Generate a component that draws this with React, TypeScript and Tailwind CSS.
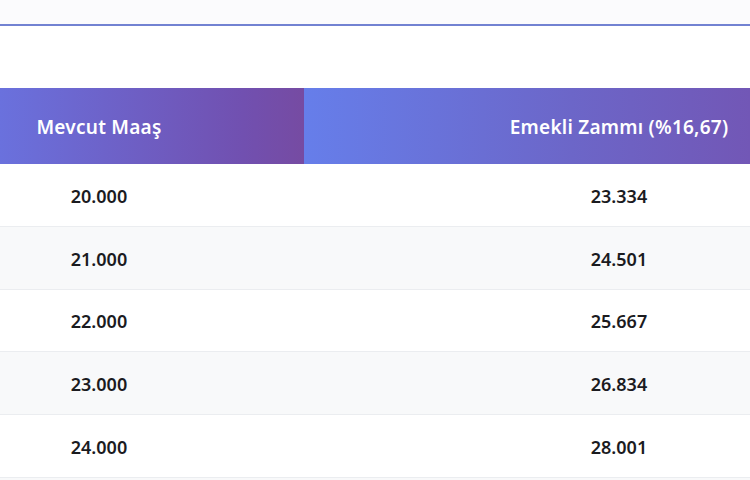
import React from "react";

const rows = [
  ["20.000", "23.334"],
  ["21.000", "24.501"],
  ["22.000", "25.667"],
  ["23.000", "26.834"],
  ["24.000", "28.001"],
];

export default function App() {
  return (
    <div
      className="w-[750px] h-[480px] overflow-hidden bg-white"
      style={{ fontFamily: '"Noto Sans", "Open Sans", sans-serif' }}
    >
      <div className="h-[24px] bg-[#fbfbfd]" />
      <div className="h-[2px] bg-[#7282d2]" />
      <div className="h-[62px] bg-white" />
      <div className="flex h-[76px] text-white font-semibold text-[19px] tracking-[0.25px]">
        <div className="w-[304px] flex items-center justify-center pr-[106px] pt-[2px] bg-[linear-gradient(90deg,#6a71dd_0%,#7150b0_80%,#764ba2_100%)]">
          Mevcut Maaş
        </div>
        <div className="flex-1 flex items-center justify-center pl-[184px] pt-[2px] bg-[linear-gradient(90deg,#667eea_0%,#6c66c8_60%,#7257b6_100%)]">
          Emekli Zammı (%16,67)
        </div>
      </div>
      {rows.map((r, i) => (
        <div
          key={i}
          className={`flex h-[62.8px] pt-[3px] border-b border-[#ebedf0] text-[18px] font-semibold text-[#1b1b1f] ${
            i % 2 === 1 ? "bg-[#f8f9fa]" : "bg-white"
          }`}
        >
          <div className="w-[304px] flex items-center justify-center pr-[106px]">{r[0]}</div>
          <div className="flex-1 flex items-center justify-center pl-[184px]">{r[1]}</div>
        </div>
      ))}
      <div className="h-[10px] bg-[#f8f9fa]" />
    </div>
  );
}
